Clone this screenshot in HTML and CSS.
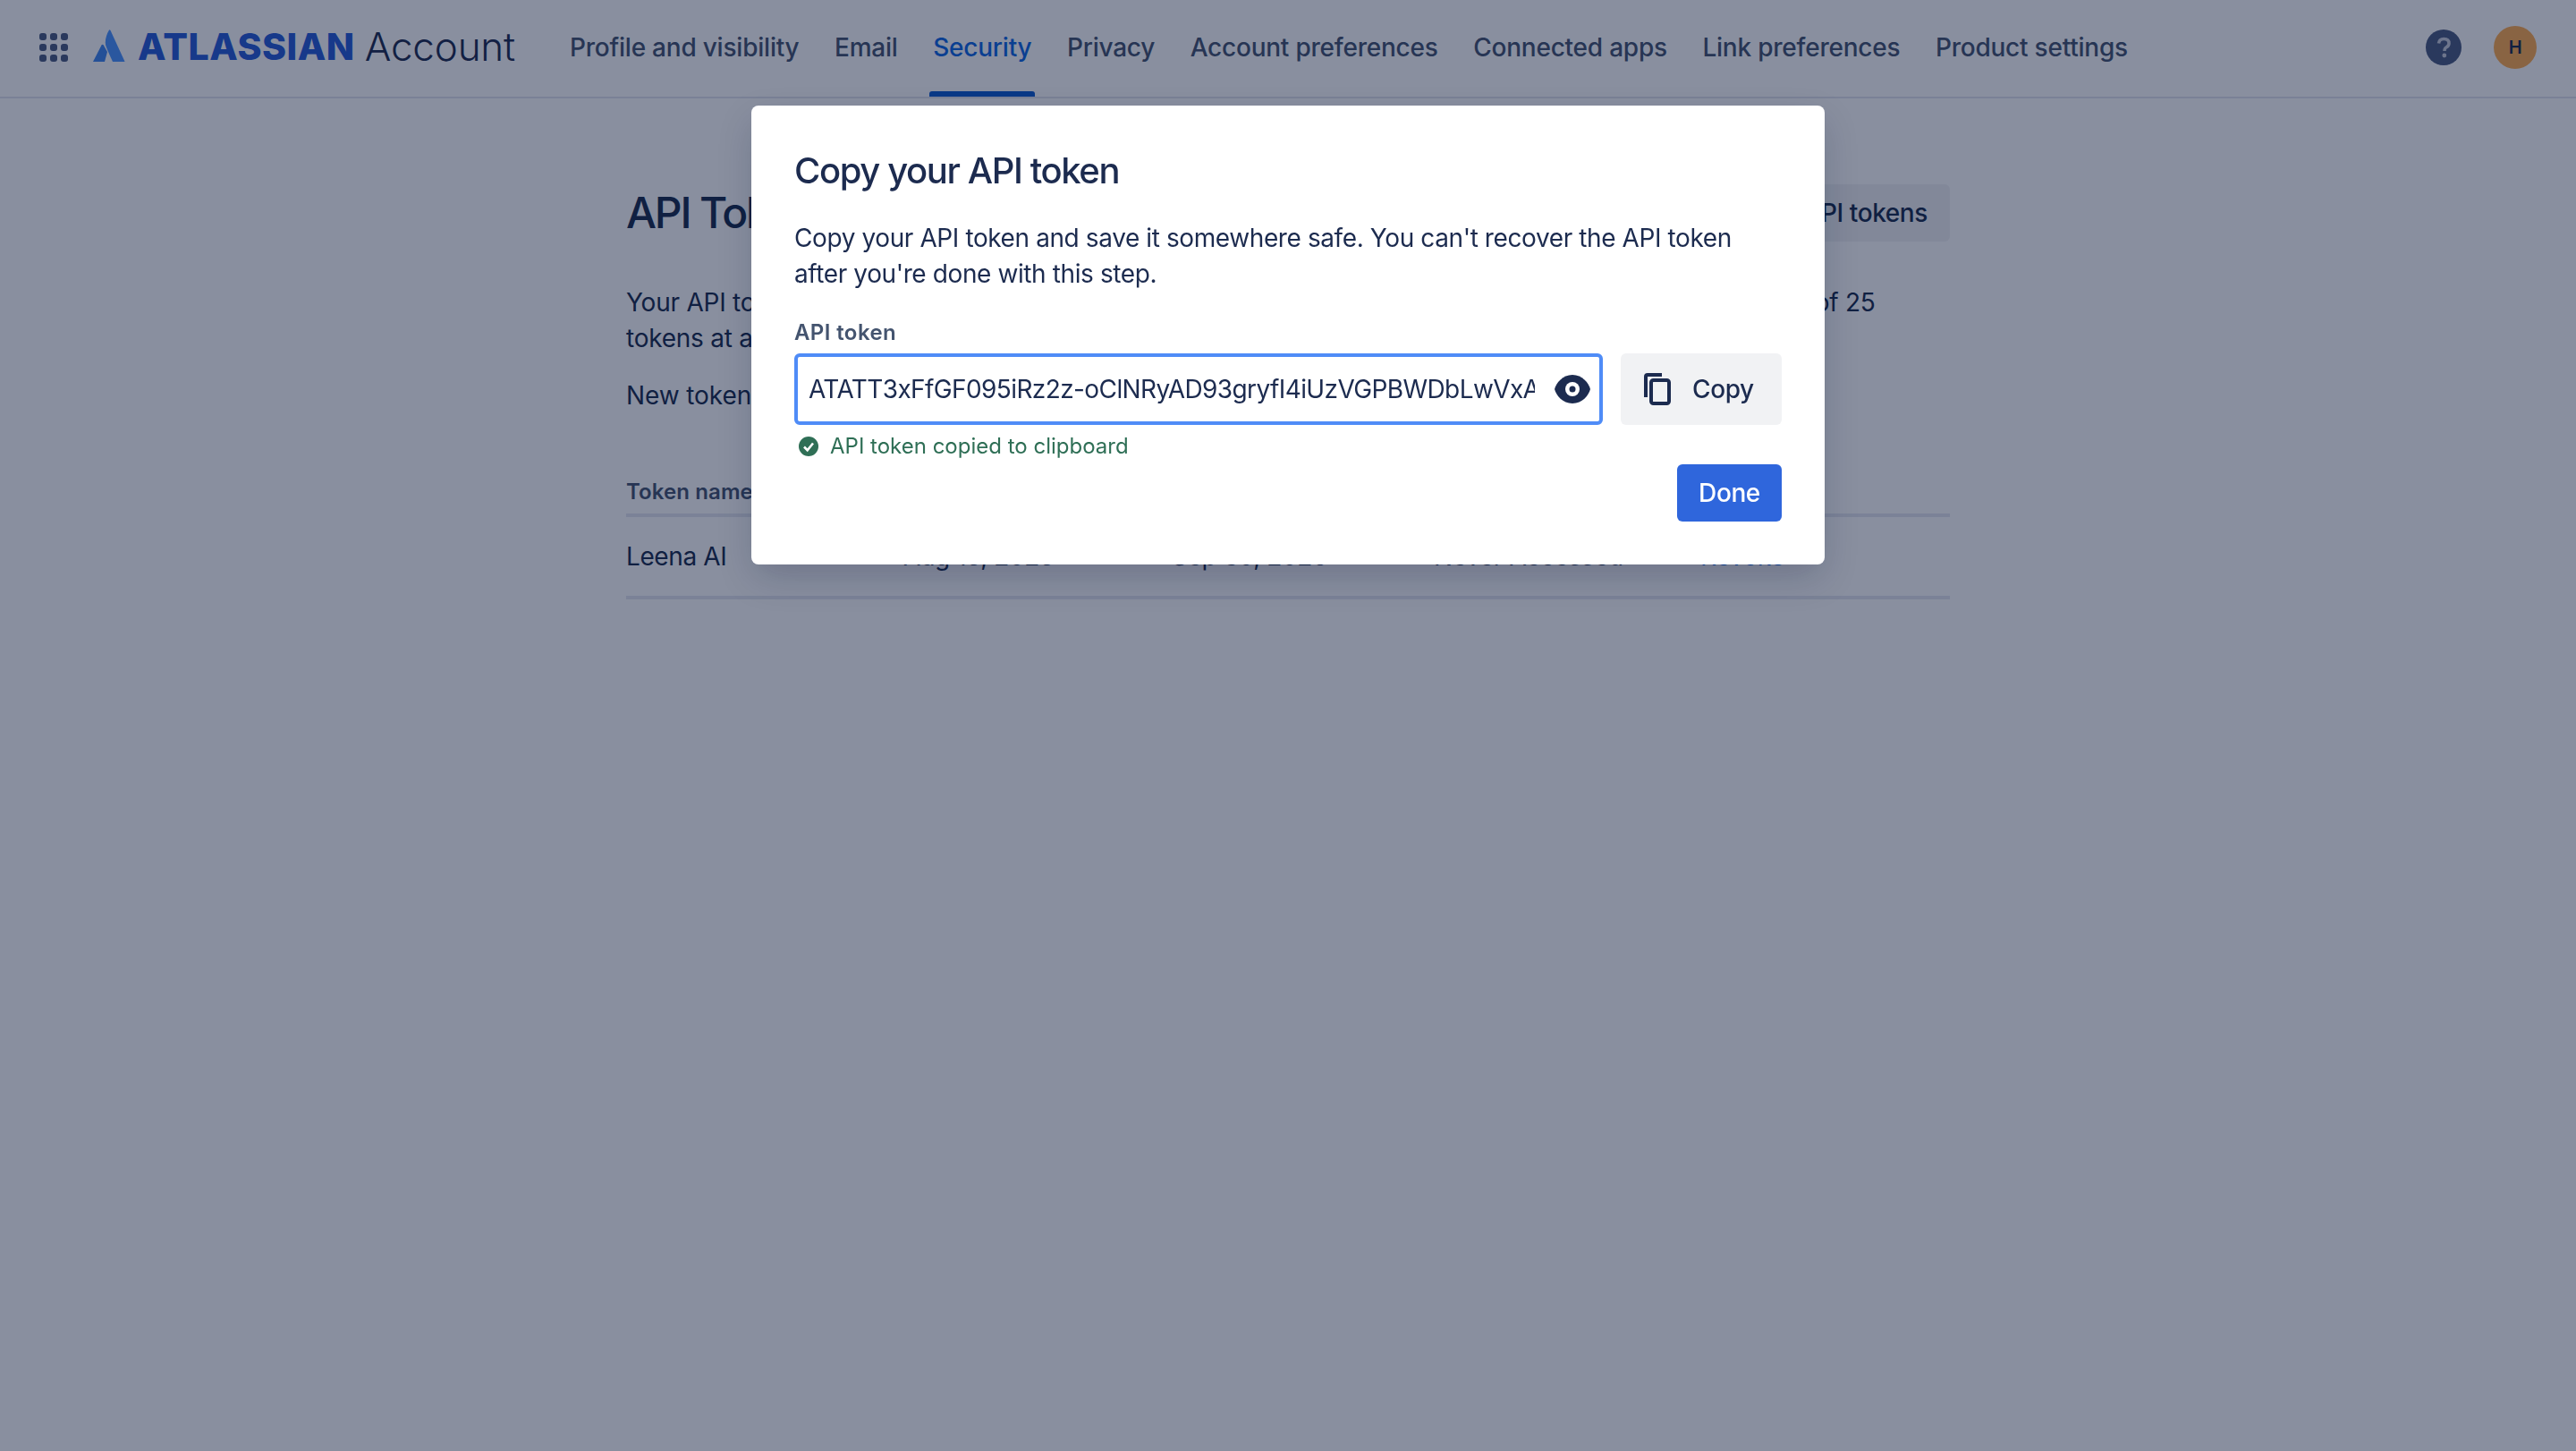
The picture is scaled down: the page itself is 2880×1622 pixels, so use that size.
FILE: index.html

```html
<!DOCTYPE html>
<html lang="en">
<head>
    <meta charset="UTF-8">
    <title>API Tokens</title>
    <link rel="stylesheet" href="styles.css">
</head>
<body>
    <header class="topbar">
        <svg class="app-switcher" width="32" height="32" viewBox="0 0 32 32" fill="currentColor">
            <rect x="0" y="0" width="8" height="8" rx="3"/><rect x="12" y="0" width="8" height="8" rx="3"/><rect x="24" y="0" width="8" height="8" rx="3"/>
            <rect x="0" y="12" width="8" height="8" rx="3"/><rect x="12" y="12" width="8" height="8" rx="3"/><rect x="24" y="12" width="8" height="8" rx="3"/>
            <rect x="0" y="24" width="8" height="8" rx="3"/><rect x="12" y="24" width="8" height="8" rx="3"/><rect x="24" y="24" width="8" height="8" rx="3"/>
        </svg>
        <div class="logo">
            <svg class="logo-mark" width="36" height="36" viewBox="0 0 36 36">
                <path d="M0 36 L9.5 17.5 Q10.5 16 11.8 17.5 L16 25 L13 36 Z" fill="#3f86f0"/>
                <path d="M18 0.5 Q13 9 14 17 Q15 21 22 36 L35.6 36 L19.5 1 Q18.7 -0.2 18 0.5 Z" fill="#4994ff"/>
            </svg>
            <span class="logo-brand">ATLASSIAN</span>
            <span class="logo-product">Account</span>
        </div>
        <nav class="nav">
            <a class="nav-item">Profile and visibility</a>
            <a class="nav-item">Email</a>
            <a class="nav-item active">Security</a>
            <a class="nav-item">Privacy</a>
            <a class="nav-item">Account preferences</a>
            <a class="nav-item">Connected apps</a>
            <a class="nav-item">Link preferences</a>
            <a class="nav-item">Product settings</a>
        </nav>
        <div class="topbar-right">
            <svg class="help" width="40" height="40" viewBox="0 0 40 40">
                <circle cx="20" cy="20" r="20" fill="#4a5a80"/>
                <path d="M14.5 15.5 Q15 10.5 20.3 10.5 Q26 10.5 26 15.5 Q26 18.3 22.8 20 Q21 21 21 24" fill="none" stroke="#c9cedb" stroke-width="3.6"/>
                <circle cx="20.8" cy="29" r="2.4" fill="#c9cedb"/>
            </svg>
            <div class="avatar">H</div>
        </div>
    </header>

    <main class="page">
        <div class="page-head">
            <h1>API Tokens</h1>
            <button class="btn-secondary">Revoke all API tokens</button>
        </div>
        <p class="intro">Your API tokens need to be treated as securely as any other password. You can only have a maximum of 25<br>tokens at a time.</p>
        <p class="intro-next">New tokens expire one year after they are created.</p>
        <div class="table">
            <div class="table-row table-head">
                <span>Token name</span><span>Created</span><span>Expires</span><span>Last accessed</span><span>Actions</span>
            </div>
            <div class="table-row">
                <span>Leena AI</span><span>Aug 15, 2025</span><span>Sep 30, 2026</span><span>Never Accessed</span><a class="revoke">Revoke</a>
            </div>
        </div>
    </main>

    <div class="blanket">
        <div class="modal">
            <h2>Copy your API token</h2>
            <p>Copy your API token and save it somewhere safe. You can't recover the API token<br>after you're done with this step.</p>
            <label class="field-label" for="token">API token</label>
            <div class="field-row">
                <div class="token-field">
                    <input id="token" type="text" readonly value="ATATT3xFfGF095iRz2z-oClNRyAD93gryfI4iUzVGPBWDbLwVxA4kR7mQz2">
                    <svg class="eye" width="40" height="32" viewBox="0 0 40 32">
                        <path d="M20 0 C31 0 38 9 40 16 C38 23 31 32 20 32 C9 32 2 23 0 16 C2 9 9 0 20 0 Z" fill="#1c2b4f"/>
                        <circle cx="20" cy="16" r="8" fill="#fff"/>
                        <circle cx="20" cy="16" r="3.5" fill="#1c2b4f"/>
                    </svg>
                </div>
                <button class="btn-copy">
                    <svg width="30" height="36" viewBox="0 0 30 36" fill="none" stroke="#1c2b4f" stroke-width="4">
                        <path d="M2 27 V4 Q2 2 4 2 H20"/>
                        <rect x="8" y="8" width="20" height="26" rx="2.5"/>
                    </svg>
                    Copy
                </button>
            </div>
            <div class="copied">
                <svg width="24" height="24" viewBox="0 0 24 24">
                    <circle cx="12" cy="12" r="11" fill="#2f6f56"/>
                    <path d="M7 12.5 L10.7 16.2 L17 8.5" fill="none" stroke="#fff" stroke-width="2.6"/>
                </svg>
                API token copied to clipboard
            </div>
            <div class="modal-foot">
                <button class="btn-primary">Done</button>
            </div>
        </div>
    </div>
</body>
</html>
```

FILE: styles.css

```css
* {
    box-sizing: border-box;
}
body {
    margin: 0;
    min-height: 1622px;
    background-color: #fff;
    color: #172B4D;
    font-family: Inter, "Liberation Sans", sans-serif;
    font-size: 28px;
    line-height: 40px;
    letter-spacing: -0.4px;
}
h1, h2, p {
    margin: 0;
}
button {
    font-family: inherit;
    letter-spacing: inherit;
    border: none;
    cursor: pointer;
}

/* top bar */
.topbar {
    display: flex;
    align-items: center;
    height: 110px;
    padding: 0 44px 2px;
    border-bottom: 2px solid #e2e5ee;
}
.app-switcher {
    color: #4a5a80;
    margin-right: 28px;
}
.logo {
    display: flex;
    align-items: center;
    margin-right: 57px;
    margin-bottom: 2px;
}
.logo-mark {
    margin-right: 14px;
    margin-bottom: 2px;
}
.logo-brand {
    color: #265ad7;
    font-size: 41px;
    font-weight: 800;
    line-height: 48px;
    letter-spacing: 0.5px;
    margin-right: 11px;
}
.logo-product {
    color: #1c2b4f;
    font-size: 44px;
    font-weight: 300;
    line-height: 48px;
    letter-spacing: -0.2px;
}
.nav {
    display: flex;
    align-self: stretch;
    gap: 31.5px;
}
.nav-item {
    display: flex;
    align-items: center;
    position: relative;
    padding: 0 4px;
    color: #44546F;
    font-weight: 500;
    letter-spacing: -0.22px;
}
.nav-item.active {
    color: #0C66E4;
}
.nav-item.active::after {
    content: "";
    position: absolute;
    left: 0;
    right: 0;
    bottom: -2px;
    height: 6px;
    background-color: #0C5BD0;
    border-radius: 3px 3px 0 0;
}
.topbar-right {
    display: flex;
    align-items: center;
    gap: 36px;
    margin-left: auto;
}
.avatar {
    display: flex;
    align-items: center;
    justify-content: center;
    width: 48px;
    height: 48px;
    border-radius: 50%;
    background-color: #ffad4f;
    font-size: 20px;
    font-weight: 600;
}

/* page behind the dialog */
.page {
    width: 1480px;
    margin: 0 auto;
    padding-top: 96px;
}
.page-head {
    display: flex;
    align-items: center;
    justify-content: space-between;
    height: 64px;
    margin-bottom: 48px;
}
h1 {
    font-size: 48px;
    font-weight: 500;
    line-height: 56px;
    letter-spacing: -2.2px;
}
.btn-secondary {
    height: 64px;
    padding: 0 25px;
    background-color: #F1F2F4;
    border-radius: 6px;
    color: #172B4D;
    font-size: 28px;
    font-weight: 500;
}
.intro {
    letter-spacing: -0.24px;
}
.intro-next {
    margin-top: 24px;
    letter-spacing: -0.1px;
}
.table {
    margin-top: 72px;
}
.table-row {
    display: grid;
    grid-template-columns: 310px 300px 293px 298px 1fr;
    align-items: center;
    height: 92px;
    border-bottom: 4px solid #e5e7ef;
}
.table-head {
    height: 44px;
    padding-bottom: 8px;
    color: #44546F;
    font-size: 24px;
    font-weight: 600;
    line-height: 32px;
    letter-spacing: 0.1px;
}
.revoke {
    color: #0C66E4;
}

/* dialog */
.blanket {
    position: fixed;
    top: 0;
    left: 0;
    right: 0;
    bottom: 0;
    display: flex;
    justify-content: center;
    align-items: flex-start;
    padding-top: 118px;
    background-color: rgba(9, 20, 55, 0.48);
}
.modal {
    width: 1200px;
    padding: 48px;
    background-color: #fff;
    border-radius: 8px;
    color: #1c2b4f;
    box-shadow: 0 16px 40px -4px rgba(9, 20, 55, 0.22);
}
h2 {
    font-size: 40px;
    font-weight: 500;
    line-height: 50px;
    letter-spacing: -1.4px;
    margin-bottom: 30px;
}
.field-label {
    display: block;
    margin-top: 30px;
    margin-bottom: 7px;
    color: #44546F;
    font-size: 24px;
    font-weight: 600;
    line-height: 32px;
    letter-spacing: 0.4px;
}
.field-row {
    display: flex;
    gap: 20px;
}
.token-field {
    display: flex;
    align-items: center;
    width: 904px;
    height: 80px;
    padding: 0 10px 0 12px;
    border: 4px solid #4f8cf7;
    border-radius: 6px;
}
.token-field input {
    flex: 1;
    min-width: 0;
    margin-right: 22px;
    padding: 0;
    border: none;
    outline: none;
    color: #1c2b4f;
    font-family: inherit;
    font-size: 28px;
    letter-spacing: -0.6px;
}
.btn-copy {
    display: flex;
    align-items: center;
    gap: 24px;
    width: 180px;
    height: 80px;
    padding: 0 26px;
    background-color: #F1F2F4;
    border-radius: 6px;
    color: #1c2b4f;
    font-size: 28px;
    font-weight: 500;
}
.copied {
    display: flex;
    align-items: center;
    gap: 12px;
    margin-top: 8px;
    padding-left: 4px;
    color: #2f6f56;
    font-size: 24px;
    line-height: 32px;
    letter-spacing: 0;
}
.modal-foot {
    display: flex;
    justify-content: flex-end;
    margin-top: 4px;
}
.btn-primary {
    width: 117px;
    height: 64px;
    background-color: #2f66dc;
    border-radius: 6px;
    color: #fff;
    font-size: 28px;
    font-weight: 500;
}
```
